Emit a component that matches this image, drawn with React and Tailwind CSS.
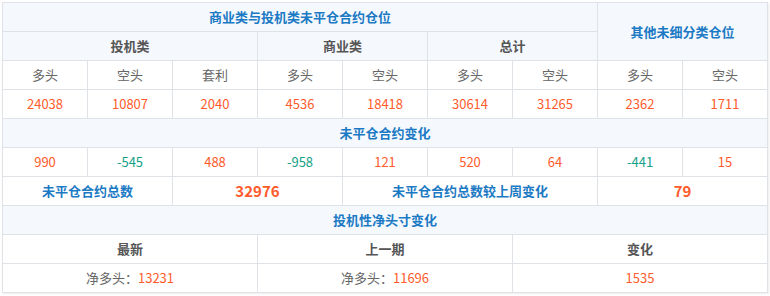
import React from 'react';

const UP = 'text-[#ff5b2c]';
const DOWN = 'text-[#16a08a]';

const cell = 'border border-[#dfe3e8] h-[29px] p-0 text-center align-middle';
const head = `${cell} bg-[#f5f9fe] font-bold text-[#1c7ac4]`;
const sub = `${cell} bg-[#f5f9fe] font-bold text-[#555]`;
const label = `${cell} text-[#666]`;

const positions = [24038, 10807, 2040, 4536, 18418, 30614, 31265, 2362, 1711];
const changes = [990, -545, 488, -958, 121, 520, 64, -441, 15];
const sides = ['多头', '空头', '套利', '多头', '空头', '多头', '空头', '多头', '空头'];

export default function App() {
  return (
    <div className="bg-white w-[770px] h-[296px] pt-[2px] pl-[2px]" style={{ fontFamily: '"Noto Sans CJK SC", "Noto Sans", sans-serif' }}>
      <table className="table-fixed border-collapse w-[766px] text-[13px] border border-[#d8dce2] shadow-[1px_1px_2px_rgba(0,0,0,0.08)]">
        <colgroup>
          {sides.map((_, i) => <col key={i} className="w-[85px]" />)}
        </colgroup>
        <tbody>
          <tr>
            <td colSpan={7} className={head}>商业类与投机类未平仓合约仓位</td>
            <td colSpan={2} rowSpan={2} className={head}>其他未细分类仓位</td>
          </tr>
          <tr>
            <td colSpan={3} className={sub}>投机类</td>
            <td colSpan={2} className={sub}>商业类</td>
            <td colSpan={2} className={sub}>总计</td>
          </tr>
          <tr>
            {sides.map((s, i) => <td key={i} className={label}>{s}</td>)}
          </tr>
          <tr>
            {positions.map((n, i) => <td key={i} className={`${cell} ${UP}`}>{n}</td>)}
          </tr>
          <tr>
            <td colSpan={9} className={head}>未平仓合约变化</td>
          </tr>
          <tr>
            {changes.map((n, i) => (
              <td key={i} className={`${cell} ${n < 0 ? DOWN : UP}`}>{n}</td>
            ))}
          </tr>
          <tr>
            <td colSpan={2} className={`${cell} font-bold text-[#1c7ac4]`}>未平仓合约总数</td>
            <td colSpan={2} className={`${cell} font-bold text-[15px] ${UP}`}>32976</td>
            <td colSpan={3} className={`${cell} font-bold text-[#1c7ac4]`}>未平仓合约总数较上周变化</td>
            <td colSpan={2} className={`${cell} font-bold text-[15px] ${UP}`}>79</td>
          </tr>
          <tr>
            <td colSpan={9} className={head}>投机性净头寸变化</td>
          </tr>
          <tr>
            <td colSpan={3} className={`${cell} font-bold text-[#555]`}>最新</td>
            <td colSpan={3} className={`${cell} font-bold text-[#555]`}>上一期</td>
            <td colSpan={3} className={`${cell} font-bold text-[#555]`}>变化</td>
          </tr>
          <tr>
            <td colSpan={3} className={label}>净多头：<span className={UP}>13231</span></td>
            <td colSpan={3} className={label}>净多头：<span className={UP}>11696</span></td>
            <td colSpan={3} className={`${cell} ${UP}`}>1535</td>
          </tr>
        </tbody>
      </table>
    </div>
  );
}
